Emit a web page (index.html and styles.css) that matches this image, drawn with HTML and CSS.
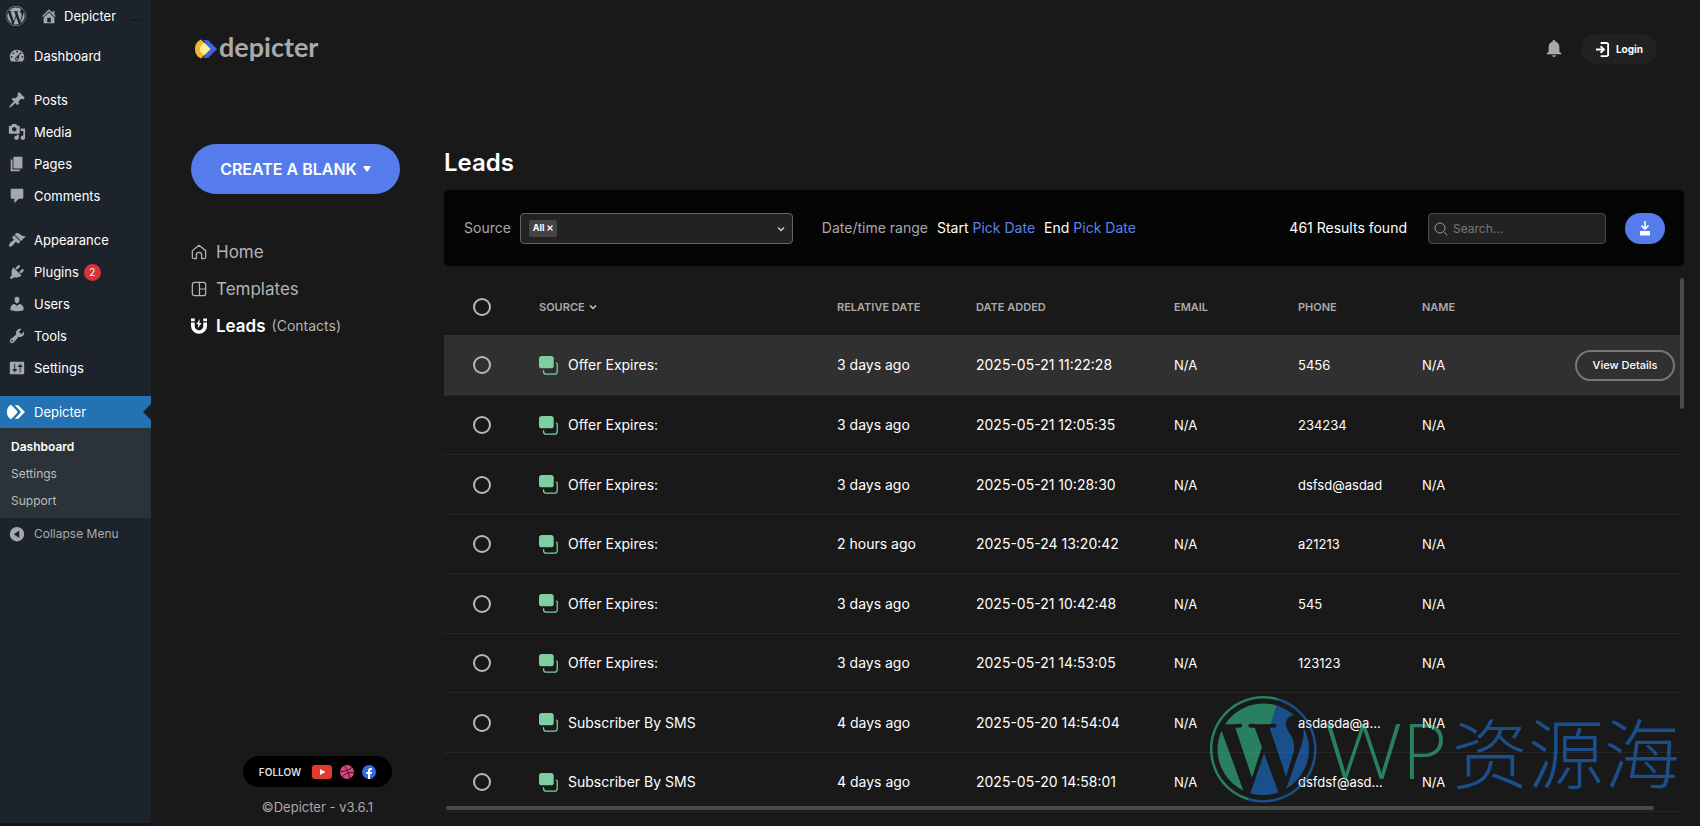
FILE: index.html
```html
<!DOCTYPE html>
<html lang="en">
<head>
<meta charset="utf-8">
<title>Depicter - Leads</title>
<link rel="stylesheet" href="styles.css">
</head>
<body>
<svg class="sprite" aria-hidden="true">
  <symbol id="wp" viewBox="0 0 123 123"><path d="m8.708 61.26c0 20.802 12.089 38.779 29.619 47.298l-25.069-68.686c-2.916 6.536-4.55 13.769-4.55 21.388z"/><path d="m96.74 58.608c0-6.495-2.333-10.993-4.334-14.494-2.664-4.329-5.161-7.995-5.161-12.324 0-4.831 3.664-9.328 8.825-9.328.233 0 .454.029.681.042-9.35-8.566-21.807-13.796-35.489-13.796-18.36 0-34.513 9.42-43.91 23.688 1.233.037 2.395.063 3.382.063 5.497 0 14.006-.667 14.006-.667 2.833-.167 3.167 3.994.337 4.329 0 0-2.847.335-6.015.501l19.138 56.925 11.501-34.493-8.188-22.434c-2.83-.166-5.511-.501-5.511-.501-2.832-.166-2.5-4.496.332-4.329 0 0 8.679.667 13.843.667 5.496 0 14.006-.667 14.006-.667 2.835-.167 3.168 3.994.337 4.329 0 0-2.853.335-6.015.501l18.992 56.494 5.242-17.517c2.272-7.269 4.001-12.49 4.001-16.989z"/><path d="m62.184 65.857-15.768 45.819c4.708 1.384 9.687 2.141 14.846 2.141 6.12 0 11.989-1.058 17.452-2.979-.141-.225-.269-.464-.374-.724z"/><path d="m107.376 36.046c.226 1.674.354 3.471.354 5.404 0 5.333-.996 11.328-3.996 18.824l-16.053 46.413c15.624-9.111 26.133-26.038 26.133-45.426.001-9.137-2.333-17.729-6.438-25.215z"/><path d="m61.262 0c-33.779 0-61.262 27.481-61.262 61.26 0 33.783 27.483 61.263 61.262 61.263 33.778 0 61.265-27.48 61.265-61.263-.001-33.779-27.487-61.26-61.265-61.26zm0 119.715c-32.23 0-58.453-26.223-58.453-58.455 0-32.23 26.222-58.451 58.453-58.451 32.229 0 58.45 26.221 58.45 58.451 0 32.232-26.221 58.455-58.45 58.455z"/></symbol>
  <symbol id="popup" viewBox="0 0 20 20"><rect x="0" y="0" width="15.500" height="13" rx="3" fill="#7dcfa1"/><path d="M17.800 7.500h.4a1 1 0 0 1 1 1v7.700a3 3 0 0 1-3 3H7.800a3 3 0 0 1-3-3V15" fill="none" stroke="#7dcfa1" stroke-width="1.300"/></symbol>
</svg>

<div class="page">
  <aside class="admin">
    <div class="adminbar">
      <a href="#" aria-label="About WordPress"><svg class="wp-mark" viewBox="0 0 123 123"><use href="#wp"/></svg></a>
      <a href="#" class="site"><svg class="site-icon" viewBox="0 0 20 20"><path d="M16 8.500l1.530 1.530-1.060 1.060L10 4.600l-6.470 6.490-1.060-1.060L10 2.500l4 4v-2h2v4zm-6-2.460l6 5.990V18H4v-5.970zM12 17v-5H8v5h4z"/></svg>Depicter</a>
      <span class="more">...</span>
    </div>
    <nav class="menu" aria-label="Admin menu">
      <ul>
        <li><a href="#"><svg viewBox="0 0 20 20"><path fill-rule="evenodd" d="M3.76 16h12.48c1.1-1.37 1.76-3.11 1.76-5 0-4.42-3.58-8-8-8s-8 3.58-8 8c0 1.89.66 3.63 1.76 5zM10 4c.55 0 1 .45 1 1s-.45 1-1 1-1-.45-1-1 .45-1 1-1zM6 6c.55 0 1 .45 1 1s-.45 1-1 1-1-.45-1-1 .45-1 1-1zm8 0c.55 0 1 .45 1 1s-.45 1-1 1-1-.45-1-1 .45-1 1-1zm-5.370 5.550L13 7l-1.100 6c0 1.100-.9 2-2 2s-2-.9-2-2c0-.57.34-1.080.73-1.450zM4 10c.55 0 1 .45 1 1s-.45 1-1 1-1-.45-1-1 .45-1 1-1zm12 0c.55 0 1 .45 1 1s-.45 1-1 1-1-.45-1-1 .45-1 1-1zm-5 3c0-.55-.45-1-1-1s-1 .45-1 1 .45 1 1 1 1-.45 1-1z"/></svg>Dashboard</a></li>
      </ul>
      <ul>
        <li><a href="#"><svg viewBox="0 0 20 20"><path d="M10.44 3.02l1.820-1.820 6.360 6.350-1.830 1.820c-1.050-.68-2.480-.57-3.410.36l-.75.75c-.92.93-1.040 2.350-.35 3.410l-1.830 1.820-2.410-2.410-2.800 2.790c-.42.42-3.380 2.710-3.800 2.290s1.860-3.390 2.280-3.810l2.790-2.790L4.100 9.360l1.830-1.820c1.050.69 2.480.57 3.400-.36l.75-.75c.93-.92 1.050-2.350.36-3.410z"/></svg>Posts</a></li>
        <li><a href="#"><svg viewBox="0 0 20 20"><path fill-rule="evenodd" d="M13 11V4c0-.55-.45-1-1-1h-1.670L9 1H5L3.670 3H2c-.55 0-1 .45-1 1v7c0 .55.45 1 1 1h10c.55 0 1-.45 1-1zM7 4.500c1.380 0 2.500 1.120 2.500 2.500S8.380 9.500 7 9.500 4.500 8.380 4.500 7 5.620 4.500 7 4.500zM14 6h5v10.500c0 1.380-1.120 2.500-2.500 2.500S14 17.880 14 16.500s1.120-2.500 2.500-2.500c.17 0 .34.02.5.05V9h-3V6zm-4 8.050V13h2v3.500c0 1.380-1.120 2.500-2.500 2.500S7 17.880 7 16.500 8.120 14 9.500 14c.17 0 .34.02.5.05z"/></svg>Media</a></li>
        <li><a href="#"><svg viewBox="0 0 20 20"><path d="M6 15V2h10v13H6zm-1 1h8v2H3V5h2v11z"/></svg>Pages</a></li>
        <li><a href="#"><svg viewBox="0 0 20 20"><path d="M4 2h12c.6 0 1 .4 1 1v9c0 .6-.4 1-1 1h-4l-5 5v-5H4c-.6 0-1-.4-1-1V3c0-.6.4-1 1-1z"/></svg>Comments</a></li>
      </ul>
      <ul>
        <li><a href="#"><svg viewBox="0 0 20 20"><path d="M14.48 11.060L7.410 3.990l1.500-1.500c.5-.56 2.300-.47 3.510.32 1.210.8 1.430 1.280 2.910 2.100 1.180.64 2.450 1.260 4.450.85zm-.71.71L6.700 4.700 4.930 6.470c-.39.39-.39 1.020 0 1.410l1.060 1.060c.39.39.39 1.030 0 1.420-.6.6-1.430 1.110-2.210 1.690-.35.26-.7.53-1.010.84C1.430 14.230.4 16.080 1.400 17.070c.99 1 2.840-.03 4.180-1.360.31-.31.58-.66.85-1.020.57-.78 1.080-1.610 1.690-2.210.39-.39 1.020-.39 1.410 0l1.060 1.060c.39.39 1.020.39 1.410 0z"/></svg>Appearance</a></li>
        <li><a href="#"><svg viewBox="0 0 20 20"><path d="M13.110 4.360L9.870 7.600 8 5.730l3.240-3.240c.35-.34 1.050-.2 1.560.32.52.51.66 1.210.31 1.550zm-8 1.770l.91-1.120 9.010 9.010-1.190.84c-.71.71-2.630 1.160-3.820 1.160H6.140L4.900 17.260c-.59.59-1.540.59-2.120 0-.59-.58-.59-1.530 0-2.120l1.240-1.240v-3.880c0-1.130.4-3.190 1.090-3.890zm7.260 3.970l3.240-3.240c.34-.35 1.040-.21 1.550.31.52.51.66 1.210.31 1.550l-3.240 3.250z"/></svg>Plugins<span class="count">2</span></a></li>
        <li><a href="#"><svg viewBox="0 0 20 20"><path d="M10 9.250c-2.270 0-2.730-3.440-2.730-3.440C7 4.020 7.820 2 9.970 2c2.160 0 2.980 2.020 2.710 3.810 0 0-.41 3.440-2.680 3.440zm0 2.570L12.720 10c2.390 0 4.520 2.330 4.520 4.530v2.490s-3.650 1.130-7.240 1.130c-3.650 0-7.240-1.130-7.240-1.130v-2.490c0-2.250 1.940-4.480 4.470-4.480z"/></svg>Users</a></li>
        <li><a href="#"><svg viewBox="0 0 20 20"><path fill-rule="evenodd" d="M16.680 9.770c-1.340 1.340-3.300 1.670-4.950.99l-5.410 6.520c-.99.99-2.590.99-3.580 0s-.99-2.590 0-3.570l6.520-5.420c-.68-1.650-.35-3.610.99-4.950 1.280-1.280 3.120-1.620 4.720-1.060l-2.890 2.890 2.820 2.820 2.860-2.870c.53 1.580.18 3.390-1.080 4.650zM3.810 16.210c.4.39 1.040.39 1.430 0 .4-.4.4-1.040 0-1.430-.39-.4-1.030-.4-1.430 0-.39.39-.39 1.030 0 1.430z"/></svg>Tools</a></li>
        <li><a href="#"><svg viewBox="0 0 20 20"><path fill-rule="evenodd" d="M18 16V4c0-.55-.45-1-1-1H3c-.55 0-1 .45-1 1v12c0 .55.45 1 1 1h14c.55 0 1-.45 1-1zM8 11h1c.55 0 1 .45 1 1s-.45 1-1 1H8v1.500c0 .28-.22.5-.5.5s-.5-.22-.5-.5V13H6c-.55 0-1-.45-1-1s.45-1 1-1h1V5.500c0-.28.22-.5.5-.5s.5.22.5.5V11zm5-2h-1c-.55 0-1-.45-1-1s.45-1 1-1h1V5.500c0-.28.22-.5.5-.5s.5.22.5.5V7h1c.55 0 1 .45 1 1s-.45 1-1 1h-1v5.500c0 .28-.22.5-.5.5s-.5-.22-.5-.5V9z"/></svg>Settings</a></li>
      </ul>
      <ul>
        <li class="active"><a href="#"><svg viewBox="0 0 20 20"><path d="M0 10C0 5.500 2 3.500 4.500 2L11 8.500q1.500 1.500 0 3L4.500 18C2 16.500 0 14.500 0 10z"/><path d="M8.500 2.500h4l7.500 7.500-7.500 7.500h-4L14.500 11.500q1.500-1.500 0-3z"/></svg>Depicter</a>
          <ul class="submenu">
            <li><a href="#" class="current">Dashboard</a></li>
            <li><a href="#">Settings</a></li>
            <li><a href="#">Support</a></li>
          </ul>
        </li>
        <li><button class="collapse" type="button"><svg viewBox="0 0 20 20"><path fill-rule="evenodd" d="M10 2.200a8 8 0 1 0 0 16 8 8 0 0 0 0-16zM12.500 6v8.400L6.500 10.200z"/></svg>Collapse Menu</button></li>
      </ul>
    </nav>
  </aside>

  <main class="main">
    <header class="top">
      <a href="#" class="brand"><svg viewBox="0 0 22 20"><path d="M8 1h4l9.500 9L12 19H8l8-9z" fill="#3f5fe6"/><path d="M13 1l9 9-9 9-4-4 5-5-5-5z" fill="#3f5fe6"/><path d="M6 .5C2.500 2 0 5 0 10s2.500 8 6 9.500L15.500 10z" fill="#f2b53a"/><path d="M9 3.500L15.500 10 9 16.500 5 12.500V7.500z" fill="#fbf08a"/></svg>depicter</a>
      <div class="account">
        <button class="bell" type="button" aria-label="Notifications"><svg viewBox="0 0 18 20"><path d="M9 0a1.800 1.800 0 0 1 1.800 1.800c2.800.8 4.200 3 4.200 6V13l2.200 1.700V16H.8v-1.300L3 13V7.800c0-3 1.400-5.200 4.200-6A1.800 1.800 0 0 1 9 0zM7 17h4a2 2 0 0 1-4 0z"/></svg></button>
        <button class="login" type="button"><svg viewBox="0 0 16 18"><path d="M1 9h8M6 5.500L9.500 9 6 12.500M6 2h6.500A1.500 1.500 0 0 1 14 3.500v11a1.500 1.500 0 0 1-1.500 1.500H6"/></svg>Login</button>
      </div>
    </header>

    <div class="body">
      <aside class="side">
        <button class="create" type="button">CREATE A BLANK<svg viewBox="0 0 8 6"><path d="M1 0h6q1 0 .5 1L5 5q-1 1-2 0L.5 1Q0 0 1 0z"/></svg></button>
        <nav class="nav" aria-label="Depicter">
          <a href="#"><svg viewBox="0 0 18 18"><path d="M1.500 7.500L9 1.500l7.500 6v7a2 2 0 0 1-2 2H12V12.500a3 3 0 0 0-6 0v4H3.500a2 2 0 0 1-2-2z"/></svg>Home</a>
          <a href="#"><svg viewBox="0 0 18 18"><rect x="1.500" y="1.500" width="15" height="15" rx="2.500"/><path d="M9.500 1.500v15M9.500 9h7"/></svg>Templates</a>
          <a href="#" class="current"><svg class="magnet" viewBox="0 0 18 18"><path d="M0 5.200h4.200V9a4.800 4.800 0 0 0 9.600 0V5.200H18V9A9 8.800 0 0 1 0 9zM0 .5h4.200v3.200H0zM13.800.5H18v3.200h-4.200zM9.800 1L6 7h2.300L7.600 11.500l4.400-6H9.500z"/></svg>Leads <span>(Contacts)</span></a>
        </nav>
        <div class="foot">
          <div class="follow">FOLLOW
            <a href="#" aria-label="YouTube"><svg class="yt" viewBox="0 0 20 14"><rect width="20" height="14" rx="3" fill="#e23a2c"/><path d="M8 4l5.500 3L8 10z" fill="#fff"/></svg></a>
            <a href="#" aria-label="Dribbble"><svg class="round" viewBox="0 0 14 14"><circle cx="7" cy="7" r="7" fill="#d6467c"/><path d="M4.500.8Q9 6 9.800 13.200M.2 6.500Q8 6.500 12 2.400M2.300 12Q6 6.500 13.800 7.800" fill="none" stroke="#4a1029"/></svg></a>
            <a href="#" aria-label="Facebook"><svg class="round" viewBox="0 0 14 14"><circle cx="7" cy="7" r="7" fill="#2f6de0"/><path d="M6 14V9H4.200V7H6V5.500Q6 3 8.500 3h1.400v1.900H9q-.9 0-.9.9V7h1.800l-.3 2H8.100v5z" fill="#fff"/></svg></a>
          </div>
          <p class="version">©Depicter - v3.6.1</p>
        </div>
      </aside>

      <section class="leads">
        <h1>Leads</h1>
        <form class="filters">
          <label for="source">Source</label>
          <div class="select">
            <select id="source"><option></option></select>
            <button class="chip" type="button">All <svg viewBox="0 0 6 6"><path d="M.5.5l5 5M5.500.5l-5 5"/></svg></button>
            <svg class="caret" viewBox="0 0 8 6"><path d="M1 1.500l3 3 3-3"/></svg>
          </div>
          <div class="range"><span class="muted">Date/time range</span><span class="pick">Start <a href="#">Pick Date</a></span><span class="pick">End <a href="#">Pick Date</a></span></div>
          <output class="results">461 Results found</output>
          <div class="search">
            <svg viewBox="0 0 14 14"><circle cx="6" cy="6" r="5"/><path d="M9.700 9.700L13.300 13.300"/></svg>
            <input type="search" placeholder="Search..." aria-label="Search">
          </div>
          <button class="download" type="button" aria-label="Download"><svg viewBox="0 0 12 15"><path d="M6 0v7M2.500 4.500L6 8l3.500-3.500" fill="none" stroke="#fff" stroke-width="1.600"/><path d="M1 10h10v4.500H1z" fill="#fff"/></svg></button>
        </form>

        <div class="table-wrap">
          <table>
            <colgroup><col class="c-check"><col><col class="c-rel"><col class="c-date"><col class="c-info"><col class="c-info"><col class="c-info"><col class="c-act"></colgroup>
            <thead>
              <tr><th><input type="checkbox" aria-label="Select all"></th><th>SOURCE <svg class="sort" viewBox="0 0 8 6"><path d="M1 1.500l3 3 3-3"/></svg></th><th>RELATIVE DATE</th><th>DATE ADDED</th><th>EMAIL</th><th>PHONE</th><th>NAME</th><th></th></tr>
            </thead>
            <tbody>
              <tr class="hover"><td><input type="checkbox" aria-label="Select lead"></td><td><div class="src"><svg><use href="#popup"/></svg>Offer Expires:</div></td><td>3 days ago</td><td>2025-05-21 11:22:28</td><td class="info">N/A</td><td class="info">5456</td><td class="info">N/A</td><td><button class="view" type="button">View Details</button></td></tr>
              <tr><td><input type="checkbox" aria-label="Select lead"></td><td><div class="src"><svg><use href="#popup"/></svg>Offer Expires:</div></td><td>3 days ago</td><td>2025-05-21 12:05:35</td><td class="info">N/A</td><td class="info">234234</td><td class="info">N/A</td><td></td></tr>
              <tr><td><input type="checkbox" aria-label="Select lead"></td><td><div class="src"><svg><use href="#popup"/></svg>Offer Expires:</div></td><td>3 days ago</td><td>2025-05-21 10:28:30</td><td class="info">N/A</td><td class="info">dsfsd@asdad</td><td class="info">N/A</td><td></td></tr>
              <tr><td><input type="checkbox" aria-label="Select lead"></td><td><div class="src"><svg><use href="#popup"/></svg>Offer Expires:</div></td><td>2 hours ago</td><td>2025-05-24 13:20:42</td><td class="info">N/A</td><td class="info">a21213</td><td class="info">N/A</td><td></td></tr>
              <tr><td><input type="checkbox" aria-label="Select lead"></td><td><div class="src"><svg><use href="#popup"/></svg>Offer Expires:</div></td><td>3 days ago</td><td>2025-05-21 10:42:48</td><td class="info">N/A</td><td class="info">545</td><td class="info">N/A</td><td></td></tr>
              <tr><td><input type="checkbox" aria-label="Select lead"></td><td><div class="src"><svg><use href="#popup"/></svg>Offer Expires:</div></td><td>3 days ago</td><td>2025-05-21 14:53:05</td><td class="info">N/A</td><td class="info">123123</td><td class="info">N/A</td><td></td></tr>
              <tr><td><input type="checkbox" aria-label="Select lead"></td><td><div class="src"><svg><use href="#popup"/></svg>Subscriber By SMS</div></td><td>4 days ago</td><td>2025-05-20 14:54:04</td><td class="info">N/A</td><td class="info">asdasda@a...</td><td class="info">N/A</td><td></td></tr>
              <tr><td><input type="checkbox" aria-label="Select lead"></td><td><div class="src"><svg><use href="#popup"/></svg>Subscriber By SMS</div></td><td>4 days ago</td><td>2025-05-20 14:58:01</td><td class="info">N/A</td><td class="info">dsfdsf@asd...</td><td class="info">N/A</td><td></td></tr>
            </tbody>
          </table>
          <div class="bar-v"></div>
          <div class="bar-h"></div>
        </div>
      </section>
    </div>
  </main>
</div>

<div class="watermark">
  <svg viewBox="0 0 123 123"><defs><linearGradient id="split" gradientUnits="userSpaceOnUse" x1="11" y1="46" x2="111" y2="76"><stop offset=".5" stop-color="#3be7a7"/><stop offset=".5" stop-color="#1d85ff"/></linearGradient></defs><use href="#wp" fill="url(#split)"/></svg>
  <span class="latin">WP</span><span class="cjk" lang="zh-CN">资源海</span>
</div>
</body>
</html>
```
FILE: styles.css
```css
* { box-sizing: border-box; }
body {
  margin: 0;
  background: #191919;
  color: #fff;
  font: 13px/20px Inter, "Liberation Sans", sans-serif;
}
a { color: inherit; text-decoration: none; }
ul { list-style: none; margin: 0; padding: 0; }
button { font: inherit; color: inherit; border: 0; background: none; padding: 0; }
svg { flex: none; display: block; }
.sprite { position: absolute; width: 0; height: 0; }

.page {
  display: grid;
  grid-template-columns: 151px 1fr;
  min-height: 100vh;
}

/* WordPress admin menu */
.admin { background: #1d232a; border-bottom: 3px solid #111419; }
.adminbar {
  display: flex;
  align-items: center;
  height: 31px;
  padding-left: 6px;
  gap: 14px;
}
.adminbar svg { fill: #a3a8ad; }
.wp-mark { width: 20px; height: 20px; }
.site { display: flex; align-items: center; gap: 6px; }
.site-icon { width: 18px; height: 18px; }
.more { color: #0b0e12; }
.menu { padding-top: 9px; display: flex; flex-direction: column; gap: 12px; }
.menu a, .collapse {
  display: flex;
  align-items: center;
  gap: 8px;
  height: 32px;
  padding-left: 8px;
}
.menu svg { width: 18px; height: 18px; fill: #a3a8ad; }
.count {
  width: 17px;
  height: 17px;
  margin-left: -3px;
  border-radius: 50%;
  background: #d63638;
  font-size: 10px;
  line-height: 17px;
  text-align: center;
}
.menu .active > a { position: relative; background: #2472b3; padding-left: 6px; }
.menu .active > a svg { width: 20px; fill: #fff; }
.active > a::after {
  content: "";
  position: absolute;
  right: 0;
  top: 8px;
  border: 8px solid transparent;
  border-left: 0;
  border-right-color: #191f24;
}
.submenu { background: #2c3338; padding: 5px 0 4px; }
.menu .submenu a { height: 27px; padding-left: 11px; font-size: 12px; color: #b9bdc0; }
.menu .submenu .current { color: #fff; font-weight: 600; }
.collapse { color: #a7aaad; font-size: 12px; }

/* Header */
.main { display: flex; flex-direction: column; padding: 0 16px 9px 40px; min-width: 0; }
.top { display: flex; justify-content: space-between; align-items: center; height: 98px; }
.brand {
  display: flex;
  align-items: center;
  gap: 2px;
  padding: 0 0 4px 4px;
  color: #aaa;
  font: 700 27px/28px Lato, sans-serif;
}
.brand svg { width: 22px; height: 20px; margin-top: 4px; }
.account { display: flex; align-items: center; gap: 19px; padding-right: 27px; }
.bell svg { width: 16px; height: 18px; fill: #aaa; }
.login {
  display: flex;
  align-items: center;
  gap: 6px;
  height: 30px;
  padding: 0 14px;
  border-radius: 15px;
  background: #212121;
  font-size: 10px;
  font-weight: 700;
}
.login svg { width: 15px; height: 17px; fill: none; stroke: #fff; stroke-width: 2; }

.body { flex: 1; display: grid; grid-template-columns: 253px 1fr; padding-top: 46px; }

/* Depicter side column */
.side { display: flex; flex-direction: column; }
.create {
  display: flex;
  align-items: center;
  justify-content: center;
  align-self: flex-start;
  gap: 6px;
  width: 209px;
  height: 50px;
  border-radius: 25px;
  background: #567cec;
  font-size: 16px;
  font-weight: 600;
}
.create svg { width: 8px; height: 6px; fill: #fff; }
.nav { margin-top: 39px; font-size: 17px; color: #b4b4b4; }
.nav a { display: flex; align-items: center; gap: 9px; height: 37px; }
.nav svg { width: 16px; height: 16px; fill: none; stroke: #b4b4b4; stroke-width: 1.4; }
.nav .magnet { fill: #fff; stroke: none; }
.nav .current { color: #fff; font-weight: 600; }
.nav span { color: #b4b4b4; font-size: 14px; font-weight: 400; margin-left: -3px; }
.foot { margin-top: auto; display: flex; flex-direction: column; align-items: center; gap: 10px; }
.follow {
  display: flex;
  align-items: center;
  gap: 8px;
  height: 31px;
  padding: 0 16px;
  border-radius: 16px;
  background: #000;
  color: #ddd;
  font-size: 10px;
  font-weight: 600;
}
.yt { width: 20px; height: 14px; margin-left: 3px; }
.round { width: 14px; height: 14px; }
.version { margin: 0; font-size: 13px; color: #aaa; }

/* Leads */
.leads { min-width: 0; }
h1 { margin: 0 0 8px; font-size: 24px; line-height: 38px; font-weight: 600; }
.filters {
  display: flex;
  align-items: center;
  height: 76px;
  padding: 0 19px 0 20px;
  border-radius: 4px;
  background: #050505;
  font-size: 14px;
}
.filters label, .muted { color: #aaa; }
.select { position: relative; width: 273px; margin-left: 9px; }
.select select, .search input {
  display: block;
  width: 100%;
  height: 31px;
  border: 1px solid #666;
  border-radius: 4px;
  background: #222;
  color: #fff;
  font: inherit;
  appearance: none;
}
.chip {
  position: absolute;
  left: 9px;
  top: 7px;
  display: flex;
  align-items: center;
  gap: 3px;
  height: 17px;
  padding: 0 4px;
  border-radius: 2px;
  background: #444;
  font-size: 9px;
  font-weight: 700;
}
.chip svg { width: 6px; height: 6px; stroke: #fff; stroke-width: 1.2; }
.caret { position: absolute; right: 8px; top: 13px; width: 8px; height: 6px; }
.caret, .sort { fill: none; stroke: #ccc; stroke-width: 1.5; }
.range { display: flex; gap: 9px; margin-left: 29px; }
.pick { display: flex; gap: 4px; }
.pick a { color: #5a82ee; }
.results { margin-left: auto; }
.search { position: relative; width: 178px; margin: 0 19px 0 21px; }
.search svg { position: absolute; left: 6px; top: 9px; width: 14px; height: 14px; fill: none; stroke: #999; }
.search input { padding: 0 8px 0 24px; border-color: #4c4c4c; font-size: 12px; }
.search input::placeholder { color: #777; opacity: 1; }
.download {
  display: grid;
  place-items: center;
  width: 40px;
  height: 31px;
  border-radius: 16px;
  background: #567cec;
}
.download svg { width: 12px; height: 15px; }

.table-wrap { position: relative; margin-top: 12px; padding-right: 4px; }
table { width: 100%; table-layout: fixed; border-collapse: collapse; }
.c-check { width: 95px; }
.c-rel { width: 139px; }
.c-date { width: 198px; }
.c-info { width: 124px; }
.c-act { width: 134px; }
th, td { padding: 0; text-align: left; white-space: nowrap; vertical-align: middle; }
th { height: 57px; color: #aaa; font-size: 11px; font-weight: 600; }
td { height: 59px; padding-top: 1px; border-bottom: 1px solid #252525; font-size: 14px; }
tr:nth-child(odd) td { height: 60px; }
td.info { font-size: 13px; }
.hover td { background: #303030; }
.sort { display: inline-block; width: 8px; height: 6px; margin-left: 2px; vertical-align: 1px; }
input[type="checkbox"] {
  appearance: none;
  display: block;
  width: 18px;
  height: 18px;
  margin: 0 0 0 29px;
  border: 2px solid #b8b8b8;
  border-radius: 50%;
}
.src { display: flex; align-items: center; gap: 10px; }
.src svg { width: 19px; height: 19px; }
.view {
  display: block;
  width: 100px;
  height: 31px;
  margin: 0 5px 0 auto;
  border: 2px solid #777;
  border-radius: 16px;
  font-size: 11px;
  font-weight: 500;
}
.bar-v, .bar-h { position: absolute; border-radius: 2px; background: #4a4a4a; }
.bar-v { right: 0; top: 0; width: 4px; height: 131px; }
.bar-h { left: 2px; right: 30px; bottom: 2px; height: 4px; }

/* Site watermark over the bottom corner */
.watermark {
  position: fixed;
  right: 20px;
  bottom: 23px;
  display: flex;
  align-items: center;
  opacity: .5;
  pointer-events: none;
}
.watermark svg { width: 107px; height: 107px; }
.latin { margin-left: 8px; color: #3be7a7; font: 300 76px/106px Lato, sans-serif; }
.cjk { margin-left: 6px; color: #1d85ff; font: 300 76px/106px "Noto Sans CJK SC", sans-serif; }
```
